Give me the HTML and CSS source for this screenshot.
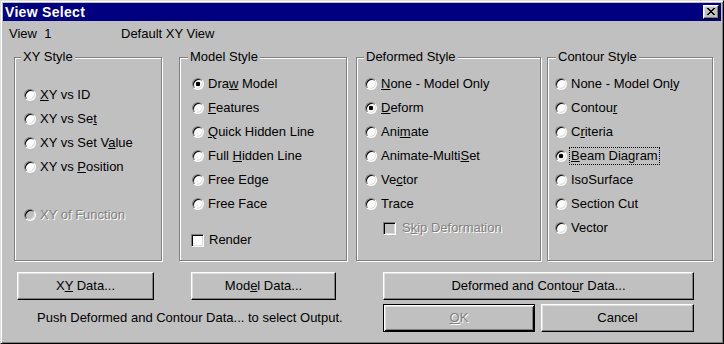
FILE: index.html
```html
<!DOCTYPE html>
<html lang="en">
<head>
  <meta charset="UTF-8">
  <title>View Select</title>
  <link rel="stylesheet" href="styles.css">
</head>
<body>
<div class="window">
  <div class="titlebar">
    <span class="title">View Select</span>
    <button class="close" title="Close">
      <svg width="8" height="7" viewBox="0 0 8 7" shape-rendering="crispEdges">
        <path fill="#000" d="M0 0h2v1H0zM6 0h2v1H6zM1 1h2v1H1zM5 1h2v1H5zM2 2h4v1H2zM3 3h2v1H3zM2 4h4v1H2zM1 5h2v1H1zM5 5h2v1H5zM0 6h2v1H0zM6 6h2v1H6z"/>
      </svg>
    </button>
  </div>
  <div class="body">
    <div class="info">
      <span class="view-num">View&nbsp; 1</span>
      <span>Default XY View</span>
    </div>

    <div class="groups">
      <div class="group group-xy">
        <div class="group-title">XY Style</div>
        <div class="opts">
          <div class="opt"><span class="radio"></span><span><u>X</u>Y vs ID</span></div>
          <div class="opt"><span class="radio"></span><span>XY vs Se<u>t</u></span></div>
          <div class="opt"><span class="radio"></span><span>XY vs Set V<u>a</u>lue</span></div>
          <div class="opt"><span class="radio"></span><span>XY vs <u>P</u>osition</span></div>
          <div class="opt"></div>
          <div class="opt disabled"><span class="radio"></span><span>XY of Function</span></div>
        </div>
      </div>

      <div class="group group-model">
        <div class="group-title">Model Style</div>
        <div class="opts">
          <div class="opt"><span class="radio on"></span><span>Dra<u>w</u> Model</span></div>
          <div class="opt"><span class="radio"></span><span><u>F</u>eatures</span></div>
          <div class="opt"><span class="radio"></span><span><u>Q</u>uick Hidden Line</span></div>
          <div class="opt"><span class="radio"></span><span>Full <u>H</u>idden Line</span></div>
          <div class="opt"><span class="radio"></span><span>Free Ed<u>g</u>e</span></div>
          <div class="opt"><span class="radio"></span><span>Free Face</span></div>
          <div class="opt opt-check render"><span class="check"></span><span>Render</span></div>
        </div>
      </div>

      <div class="group group-deformed">
        <div class="group-title">Deformed Style</div>
        <div class="opts">
          <div class="opt"><span class="radio"></span><span><u>N</u>one - Model Only</span></div>
          <div class="opt"><span class="radio on"></span><span><u>D</u>eform</span></div>
          <div class="opt"><span class="radio"></span><span>Ani<u>m</u>ate</span></div>
          <div class="opt"><span class="radio"></span><span>Animate-Multi<u>S</u>et</span></div>
          <div class="opt"><span class="radio"></span><span>Ve<u>c</u>tor</span></div>
          <div class="opt"><span class="radio"></span><span>Trace</span></div>
          <div class="opt opt-check skip disabled"><span class="check"></span><span>S<u>k</u>ip Deformation</span></div>
        </div>
      </div>

      <div class="group group-contour">
        <div class="group-title">Contour Style</div>
        <div class="opts">
          <div class="opt"><span class="radio"></span><span>None - Model On<u>l</u>y</span></div>
          <div class="opt"><span class="radio"></span><span>Contou<u>r</u></span></div>
          <div class="opt"><span class="radio"></span><span>C<u>r</u>iteria</span></div>
          <div class="opt"><span class="radio on"></span><span class="focus"><u>B</u>eam Diagram</span></div>
          <div class="opt"><span class="radio"></span><span>IsoSurface</span></div>
          <div class="opt"><span class="radio"></span><span>Section Cut</span></div>
          <div class="opt"><span class="radio"></span><span>Vector</span></div>
        </div>
      </div>
    </div>

    <div class="actions">
      <div class="left-col">
        <div class="btn-row btn-row-left">
          <button class="btn btn-xy">X<u>Y</u> Data...</button>
          <button class="btn btn-model">Mod<u>e</u>l Data...</button>
        </div>
        <div class="hint">Push Deformed and Contour Data... to select Output.</div>
      </div>
      <div class="right-col">
        <button class="btn btn-wide">Deformed and Conto<u>u</u>r Data...</button>
        <div class="btn-row btn-row-right">
          <button class="btn btn-default btn-ok" disabled><u>O</u>K</button>
          <button class="btn btn-cancel">Cancel</button>
        </div>
      </div>
    </div>
  </div>
</div>
</body>
</html>
```

FILE: styles.css
```css
html, body {
  margin: 0;
  padding: 0;
  background: #c0c0c0;
}
body {
  font: 13px/16px "Liberation Sans", Arial, sans-serif;
  color: #000;
}
.window {
  width: 724px;
  height: 344px;
  box-sizing: border-box;
  border: 1px solid;
  border-color: #dfdfdf #000 #000 #dfdfdf;
  box-shadow: inset 1px 1px #fff, inset -1px -1px #808080;
  padding: 2px;
  background: #c0c0c0;
  display: flex;
  flex-direction: column;
}

/* title bar */
.titlebar {
  height: 18px;
  flex: none;
  background: #000080;
  color: #fff;
  display: flex;
  align-items: center;
  justify-content: space-between;
  padding: 0 2px;
}
.title {
  font-weight: bold;
  font-size: 14px;
  line-height: 18px;
  letter-spacing: 0.3px;
}
.close {
  width: 16px;
  height: 14px;
  box-sizing: border-box;
  padding: 0 0 1px 0;
  border: 1px solid;
  border-color: #fff #000 #000 #fff;
  box-shadow: inset -1px -1px #808080, inset 1px 1px #dfdfdf;
  background: #c0c0c0;
  display: flex;
  align-items: center;
  justify-content: center;
}
.close svg { display: block; }

/* body */
.body {
  flex: 1;
  display: flex;
  flex-direction: column;
}
.info {
  display: flex;
  padding: 5px 0 0 6px;
}
.view-num { width: 112px; }

.groups {
  display: flex;
  margin-top: 15px;
  padding-left: 11px;
}
.group {
  height: 204px;
  box-sizing: border-box;
  border: 1px solid #808080;
  box-shadow: inset 1px 1px #fff, 1px 1px #fff;
  display: flex;
  flex-direction: column;
}
.group-title {
  align-self: flex-start;
  margin: -9px 0 0 8px;
  padding: 0 2px;
  background: #c0c0c0;
}
.group-xy { width: 148px; }
.group-xy .group-title { margin-left: 6px; }
.group-model { width: 168px; margin-left: 17px; }
.group-deformed { width: 185px; margin-left: 9px; }
.group-deformed .group-title { margin-left: 7px; }
.group-contour { width: 166px; margin-left: 6px; }

.opts { margin-top: 7px; }
.group-xy .opts { margin-top: 18px; padding-left: 9px; }
.group-model .opts { padding-left: 12px; }
.group-deformed .opts { padding-left: 8px; }
.group-contour .opts { padding-left: 7px; }

.opt {
  display: flex;
  align-items: center;
  height: 24px;
}
.radio {
  flex: none;
  width: 12px;
  height: 12px;
  box-sizing: border-box;
  border-radius: 50%;
  border: 1px solid;
  border-color: #808080 #fff #fff #808080;
  box-shadow: inset 1px 1px #000, inset -1px -1px #dfdfdf;
  background: #fff;
  margin-right: 4px;
}
.radio.on { background: radial-gradient(circle, #000 0 2px, #fff 2.6px); }
.check {
  flex: none;
  width: 13px;
  height: 13px;
  box-sizing: border-box;
  border: 1px solid;
  border-color: #808080 #fff #fff #808080;
  box-shadow: inset 1px 1px #000, inset -1px -1px #dfdfdf;
  background: #fff;
  margin-right: 5px;
}
.render { margin-top: 12px; margin-left: -1px; }
.skip { padding-left: 18px; }
.skip .check { margin-right: 6px; }

.disabled { color: #808080; text-shadow: 1px 1px 0 #fff; }
.disabled .radio, .disabled .check { background: #c0c0c0; }

.focus {
  display: inline-block;
  line-height: 16px;
  outline: 1px dotted #000;
  margin-left: -1px;
  padding: 0 1px;
}

/* buttons */
.actions {
  display: flex;
  margin-top: 11px;
  padding-left: 14px;
}
.left-col { width: 319px; }
.btn-row { display: flex; }
.btn-row-left { gap: 37px; }
.btn-xy { width: 137px; }
.btn-model { width: 145px; }
.hint { margin: 10px 0 0 20px; white-space: nowrap; }
.right-col {
  margin-left: 47px;
  width: 311px;
  display: flex;
  flex-direction: column;
  gap: 4px;
}
.btn-row-right { gap: 6px; }
.btn-ok { width: 152px; }
.btn-cancel { width: 153px; }

.btn {
  height: 28px;
  box-sizing: border-box;
  border: 1px solid;
  border-color: #fff #000 #000 #fff;
  box-shadow: inset -1px -1px #808080, inset 1px 1px #dfdfdf;
  background: #c0c0c0;
  font: inherit;
  color: #000;
  padding: 0;
  cursor: pointer;
}
.btn-default {
  border-color: #000;
  box-shadow: inset 1px 1px #fff, inset -1px -1px #000, inset 2px 2px #dfdfdf, inset -2px -2px #808080;
}
.btn:disabled {
  color: #808080;
  text-shadow: 1px 1px 0 #fff;
  cursor: default;
}
```
